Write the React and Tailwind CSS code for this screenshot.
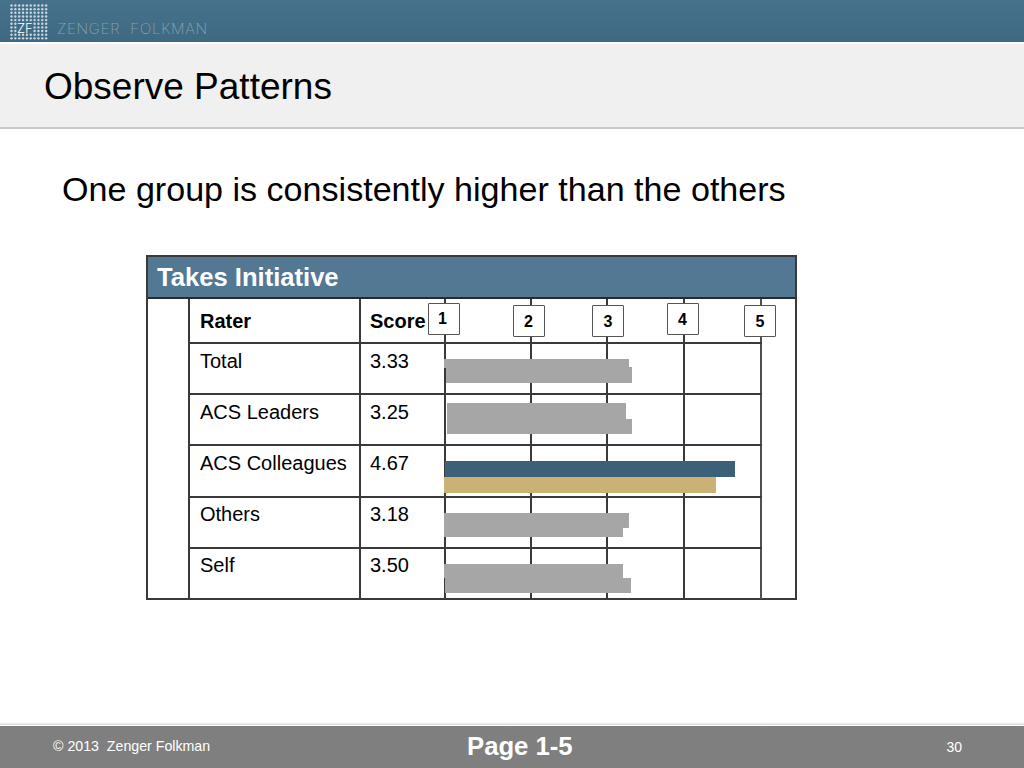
import React from 'react';

const rows = [
  { rater: 'Total', score: '3.33', height: 'h-[51px]', pad: 'pt-[5px]' },
  { rater: 'ACS Leaders', score: '3.25', height: 'h-[51px]', pad: 'pt-[5px]' },
  { rater: 'ACS Colleagues', score: '4.67', height: 'h-[52px]', pad: 'pt-[5px]' },
  { rater: 'Others', score: '3.18', height: 'h-[51px]', pad: 'pt-[4px]' },
  { rater: 'Self', score: '3.50', height: 'h-[50px]', pad: 'pt-[4px]' },
];

// left/top are relative to the table frame
const bars = [
  { left: 298, top: 104, width: 185, height: 9, color: '#a6a6a6' },
  { left: 300, top: 112, width: 186, height: 16, color: '#a6a6a6' },
  { left: 301, top: 148, width: 179, height: 16, color: '#a6a6a6' },
  { left: 301, top: 164, width: 185, height: 15, color: '#a6a6a6' },
  { left: 299, top: 206, width: 290, height: 16, color: '#3b6078' },
  { left: 298, top: 222, width: 272, height: 16, color: '#c9b273' },
  { left: 298, top: 258, width: 185, height: 15, color: '#a6a6a6' },
  { left: 298, top: 273, width: 179, height: 9, color: '#a6a6a6' },
  { left: 298, top: 309, width: 179, height: 14, color: '#a6a6a6' },
  { left: 299, top: 323, width: 186, height: 15, color: '#a6a6a6' },
];

const markers = [
  { label: '1', left: 282, top: 48, pad: 'pr-[3px]' },
  { label: '2', left: 367, top: 50, pad: 'pr-[1px] pt-[1px]' },
  { label: '3', left: 446, top: 50, pad: 'pt-[1px]' },
  { label: '4', left: 521, top: 48, pad: 'pr-[1px] pt-[1px]' },
  { label: '5', left: 598, top: 50, pad: 'pt-[1px]' },
];

const ChartCells = () => (
  <div className="flex h-full">
    <div className="w-[86px] border-r-2 border-[#3a3a3a]" />
    <div className="w-[76px] border-r-2 border-[#3a3a3a]" />
    <div className="w-[77px] border-r-2 border-[#3a3a3a]" />
    <div className="w-[77px] border-r-2 border-[#505050]" />
  </div>
);

const Logo = () => {
  const dots = [];
  for (let r = 0; r < 10; r++) {
    for (let c = 0; c < 10; c++) {
      if (r >= 5 && r <= 7 && c >= 2 && c <= 5) continue;
      dots.push(<circle key={`${r}-${c}`} cx={1.5 + c * 3.85} cy={1.5 + r * 3.65} r="1.2" fill="#c9d6df" />);
    }
  }
  return (
    <div className="relative w-[38px] h-[36px]">
      <svg width="38" height="36" viewBox="0 0 38 36">{dots}</svg>
      <span className="absolute left-[7px] top-[15px] font-['Inter',sans-serif] text-[13px] leading-[18px] font-light text-white">ZF</span>
    </div>
  );
};

export default function App() {
  return (
    <div className="w-[1024px] h-[768px] bg-white flex flex-col overflow-hidden font-['Liberation_Sans',Arial,sans-serif]">
      <header className="h-[42px] shrink-0 pl-[10px] pt-[4px] flex items-start gap-[9px] bg-gradient-to-b from-[#47728c] to-[#3e6982]">
        <Logo />
        <span className="mt-[16px] font-['Inter',sans-serif] text-[15px] leading-[18px] font-thin tracking-[0.8px] text-[#c4d3dd] whitespace-pre">ZENGER  FOLKMAN</span>
      </header>

      <div className="h-[2px] shrink-0 bg-white" />
      <div className="h-[83px] shrink-0 bg-[#f0f0f0] pl-[44px] pt-[22px] text-[37px] leading-[42px] text-black">
        Observe Patterns
      </div>
      <div className="h-[2px] shrink-0 bg-[#c8c8c8]" />

      <main className="flex-1 min-h-0">
        <p className="ml-[62px] mt-[40px] text-[34.1px] leading-[40px] text-black">
          One group is consistently higher than the others
        </p>

        <div className="relative ml-[146px] mt-[46px] w-[651px] h-[345px] border-2 border-[#3a3a3a] text-black">
          <div className="h-[42px] border-b-2 border-[#2a2a2a] bg-[#527894] pl-[9px] pt-[5px] text-[25.6px] leading-[30px] font-bold text-white">
            Takes Initiative
          </div>

          <div className="ml-[40px] w-[574px] border-l-2 border-[#3a3a3a]">
            <div className="flex h-[45px] border-b-2 border-[#3a3a3a] text-[20px] leading-[24px] font-bold">
              <div className="w-[171px] pl-[10px] pt-[10px] border-r-2 border-[#3a3a3a]">Rater</div>
              <div className="w-[85px] pl-[9px] pt-[10px] border-r-2 border-[#3a3a3a]">Score</div>
              <div className="flex-1"><ChartCells /></div>
            </div>
            {rows.map((row, i) => (
              <div key={row.rater} className={`flex ${row.height} ${i < rows.length - 1 ? 'border-b-2 border-[#3a3a3a]' : ''} text-[20px] leading-[24px]`}>
                <div className={`w-[171px] pl-[10px] ${row.pad} border-r-2 border-[#3a3a3a] whitespace-nowrap`}>{row.rater}</div>
                <div className={`w-[85px] pl-[9px] ${row.pad} border-r-2 border-[#3a3a3a]`}>{row.score}</div>
                <div className="flex-1"><ChartCells /></div>
              </div>
            ))}
          </div>

          {bars.map((bar, i) => (
            <div
              key={i}
              className="absolute"
              style={{ left: bar.left - 2, top: bar.top - 2, width: bar.width, height: bar.height, backgroundColor: bar.color }}
            />
          ))}

          {markers.map((m) => (
            <div
              key={m.label}
              className={`absolute w-[32px] h-[32px] flex items-center justify-center rounded-[1px] border border-[#555] bg-white text-[16px] font-bold ${m.pad}`}
              style={{ left: m.left - 2, top: m.top - 2 }}
            >
              {m.label}
            </div>
          ))}
        </div>
      </main>

      <div className="h-[3px] shrink-0 bg-gradient-to-b from-white to-[#d8d8d8]" />
      <div className="h-[1px] shrink-0 bg-white" />
      <footer className="relative h-[42px] shrink-0 bg-[#7f7f7f] text-white flex items-center">
        <span className="ml-[53px] text-[14.2px] whitespace-pre">© 2013  Zenger Folkman</span>
        <span className="absolute left-[467px] top-[4px] text-[25.7px] leading-[32px] font-bold">Page 1-5</span>
        <span className="ml-auto mr-[62px] text-[14px]">30</span>
      </footer>
    </div>
  );
}
